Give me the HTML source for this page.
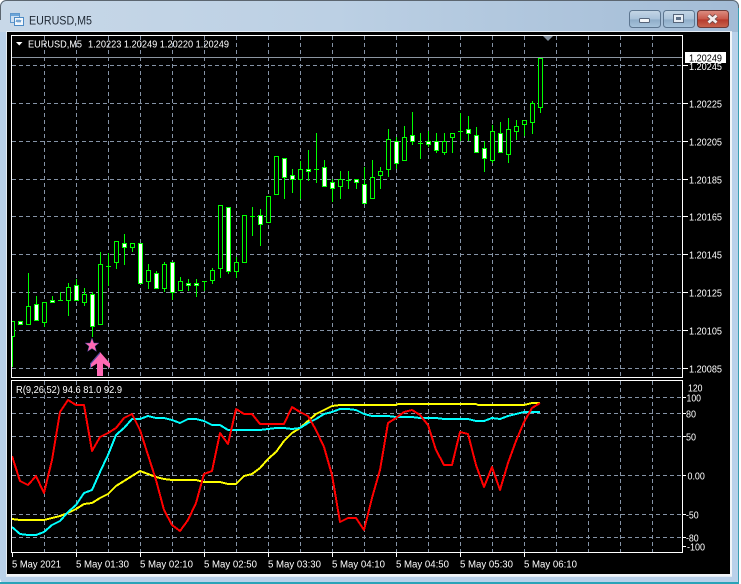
<!DOCTYPE html>
<html><head><meta charset="utf-8"><style>
html,body{margin:0;padding:0;background:#fff;width:741px;height:584px;overflow:hidden}
svg{display:block}
text{font-family:"Liberation Sans",sans-serif;font-size:10.5px;fill:#fff}
</style></head><body>
<svg width="741" height="584" viewBox="0 0 741 584" xmlns="http://www.w3.org/2000/svg">
<defs>
<linearGradient id="tb" x1="0" x2="1" y1="0" y2="0"><stop offset="0" stop-color="#c8d8e8"/><stop offset=".45" stop-color="#bcd0e4"/><stop offset="1" stop-color="#a3bcd6"/></linearGradient>
<linearGradient id="btn" x1="0" x2="0" y1="0" y2="1"><stop offset="0" stop-color="#c5d6e6"/><stop offset=".5" stop-color="#a9c2da"/><stop offset=".55" stop-color="#8fadc9"/><stop offset="1" stop-color="#a8c4dc"/></linearGradient>
<linearGradient id="cls" x1="0" x2="0" y1="0" y2="1"><stop offset="0" stop-color="#dc8f83"/><stop offset=".5" stop-color="#c9584a"/><stop offset=".55" stop-color="#b63a2c"/><stop offset="1" stop-color="#c9664f"/></linearGradient>
<clipPath id="cp"><rect x="12" y="36" width="671" height="342"/></clipPath>
</defs>
<!-- window -->
<rect x="0" y="0" width="739" height="584" rx="6" fill="#b9d1ea"/>
<path d="M0 32V7a6 6 0 0 1 6-6h727a6 6 0 0 1 6 6v25z" fill="url(#tb)"/>
<path d="M.5 20V7a6 6 0 0 1 6-6.5h726a6 6 0 0 1 6 6.500V20" fill="none" stroke="#5c6670"/>
<rect x="738" y="8" width="1" height="576" fill="#3a9fb2"/>
<rect x="0" y="582" width="739" height="2" fill="#2aa3b8"/>
<rect x="739" y="0" width="2" height="584" fill="#fff"/>
<rect x="6" y="31" width="726" height="546" fill="#e4ecf4"/>
<rect x="7" y="32" width="723" height="543" fill="#000"/>
<rect x="730" y="32" width="2" height="544" fill="#f2f5f8"/>
<rect x="7" y="574" width="725" height="2" fill="#f2f5f8"/>
<!-- icon -->
<g shape-rendering="crispEdges">
<rect x="10.500" y="13.500" width="9" height="9" fill="#cfe0f2" stroke="#5f97cc"/>
<rect x="11" y="14" width="8" height="2" fill="#6ca5d8"/>
<rect x="14.500" y="17.500" width="9" height="8" fill="#f2f7fc" stroke="#4d8bc6"/>
<path d="M16 22l1-2 1 2 1-2 1 2 1-2" fill="none" stroke="#4d8bc6"/>
</g>
<text x="29" y="24.500" style="font-size:12px;fill:#1d2733" textLength="63" lengthAdjust="spacingAndGlyphs">EURUSD,M5</text>
<!-- buttons -->
<rect x="629.500" y="10.500" width="31" height="17" rx="3" fill="url(#btn)" stroke="#5d7690"/>
<rect x="639.500" y="18.500" width="10" height="4" rx="1" fill="#f4f7fa" stroke="#56657a"/>
<rect x="663.500" y="10.500" width="31" height="17" rx="3" fill="url(#btn)" stroke="#5d7690"/>
<rect x="673.500" y="14.500" width="10" height="8" fill="#e8eef5" stroke="#56657a"/>
<rect x="676" y="17" width="5" height="3" fill="#5e7088"/>
<rect x="697.500" y="10.500" width="31" height="17" rx="3" fill="url(#cls)" stroke="#6e3a38"/>
<path d="M708.500 15.500l8 7M716.500 15.500l-8 7" stroke="#6b4a48" stroke-width="4.400"/>
<path d="M708.500 15.500l8 7M716.500 15.500l-8 7" stroke="#f4eeee" stroke-width="2.800"/>

<!-- grid -->
<g stroke="#8593a6" stroke-width="1" stroke-dasharray="4 3" fill="none" shape-rendering="crispEdges">
<path d="M12 65.500H683M12 103.500H683M12 141.500H683M12 179.500H683M12 216.500H683M12 254.500H683M12 292.500H683M12 330.500H683M12 368.500H683"/>
<path d="M12 397.500H683M12 413.500H683M12 436.500H683M12 475.500H683M12 514.500H683M12 537.500H683"/>
<path d="M44.500 36V378M76.500 36V378M108.500 36V378M140.500 36V378M172.500 36V378M204.500 36V378M236.500 36V378M268.500 36V378M300.500 36V378M332.500 36V378M364.500 36V378M396.500 36V378M428.500 36V378M460.500 36V378M492.500 36V378M524.500 36V378M556.500 36V378M588.500 36V378M620.500 36V378M652.500 36V378"/>
<path d="M44.500 381V553M76.500 381V553M108.500 381V553M140.500 381V553M172.500 381V553M204.500 381V553M236.500 381V553M268.500 381V553M300.500 381V553M332.500 381V553M364.500 381V553M396.500 381V553M428.500 381V553M460.500 381V553M492.500 381V553M524.500 381V553M556.500 381V553M588.500 381V553M620.500 381V553M652.500 381V553"/>
</g>
<!-- ask line -->
<path d="M12 57.500H683" stroke="#8c96a2" shape-rendering="crispEdges"/>
<path d="M543 36h10l-5 5z" fill="#7f8b99"/>

<!-- candles -->
<g clip-path="url(#cp)" shape-rendering="crispEdges" stroke="#00ff00" stroke-width="1">
<path fill="none" d="M12.500 321V367M28.500 273V324M36.500 296V304M44.500 302V327M52.500 296V302M60.500 292V300M68.500 283V316M76.500 279V300M84.500 288V306M92.500 292V337M100.500 252V324M108.500 253V286M116.500 241V269M124.500 234V265M132.500 243V252M148.500 264V289M156.500 271V288M164.500 262V292M172.500 262V300M180.500 277V290M188.500 279V291M196.500 279V297M204.500 281V291M212.500 268V284M220.500 205V278M228.500 207V274M236.500 257V278M252.500 207V236M260.500 209V246M268.500 196V223M284.500 158V199M292.500 169V193M300.500 161V199M308.500 150V181M316.500 133V183M324.500 160V186M332.500 179V202M340.500 171V199M348.500 171V189M356.500 179V189M364.500 167V203M372.500 160V198M380.500 167V189M388.500 129V177M396.500 137V169M404.500 126V160M412.500 112V145M420.500 133V159M428.500 131V147M436.500 133V153M444.500 133V155M452.500 133V153M460.500 113V141M468.500 116V141M476.500 127V152M484.500 141V172M492.500 125V163M500.500 122V152M508.500 118V163M516.500 120V140M524.500 120V136M532.500 101V134M540.500 58V113"/>
<path fill="none" d="M58 300.500h5M106 266.500h5M202 281.500h5M250 216.500h5M314 169.500h5M346 180.500h5M418 143.500h5M458 131.500h5"/>
<path fill="#000" d="M10.500 321.500h4v15h-4zM26.500 306.500h4v18h-4zM42.500 302.500h4v20h-4zM66.500 287.500h4v13h-4zM82.500 294.500h4v8h-4zM98.500 264.500h4v60h-4zM114.500 241.500h4v21h-4zM130.500 243.500h4v4h-4zM146.500 270.500h4v11h-4zM162.500 264.500h4v24h-4zM178.500 281.500h4v9h-4zM210.500 270.500h4v10h-4zM218.500 205.500h4v63h-4zM234.500 262.500h4v9h-4zM242.500 215.500h4v47h-4zM266.500 196.500h4v26h-4zM274.500 156.500h4v38h-4zM298.500 169.500h4v10h-4zM338.500 179.500h4v7h-4zM370.500 177.500h4v21h-4zM378.500 171.500h4v4h-4zM386.500 139.500h4v30h-4zM402.500 137.500h4v23h-4zM442.500 141.500h4v11h-4zM450.500 133.500h4v4h-4zM490.500 131.500h4v29h-4zM506.500 129.500h4v25h-4zM514.500 126.500h4v5h-4zM522.500 120.500h4v4h-4zM530.500 103.500h4v19h-4zM538.500 58.500h4v49h-4z"/>
<path fill="#fff" d="M18.500 321.500h4v3h-4zM34.500 304.500h4v16h-4zM50.500 300.500h4v2h-4zM74.500 285.500h4v15h-4zM90.500 294.500h4v32h-4zM122.500 243.500h4v4h-4zM138.500 243.500h4v40h-4zM154.500 273.500h4v15h-4zM170.500 262.500h4v30h-4zM186.500 283.500h4v2h-4zM194.500 283.500h4v2h-4zM226.500 207.500h4v64h-4zM258.500 215.500h4v9h-4zM282.500 158.500h4v19h-4zM290.500 175.500h4v4h-4zM306.500 169.500h4v2h-4zM322.500 167.500h4v19h-4zM330.500 182.500h4v6h-4zM354.500 179.500h4v3h-4zM362.500 184.500h4v19h-4zM394.500 141.500h4v22h-4zM410.500 135.500h4v6h-4zM426.500 141.500h4v3h-4zM434.500 141.500h4v9h-4zM466.500 129.500h4v4h-4zM474.500 135.500h4v17h-4zM482.500 148.500h4v10h-4zM498.500 133.500h4v19h-4z"/>
</g>

<!-- star and arrow -->
<path d="M92 338l1.900 5h5.100l-4 3.200 1.500 5.300-4.500-3-4.500 3 1.500-5.300-4-3.200h5.100z" fill="#ff69b4" stroke="#3a3f8f" stroke-width=".5"/>
<path d="M100 352l10 11.500v4.500l-7-4.500v12.500h-6v-12.500l-7 4.500v-4.500z" fill="#ff69b4"/>
<path d="M100 352l-10 11.500v4.500l1-.6v-3.400l9-10.200z" fill="#4a4aa0"/>

<!-- indicator lines -->
<g fill="none" stroke-width="2" stroke-linejoin="round" shape-rendering="crispEdges">
<polyline stroke="#ffff00" points="12,519 20,520 44,520 52,518 60,516 68,513 76,509 84,504 92,503 100,498 108,494 116,486 124,481 132,476 140,471 148,474 156,477 164,479 172,480 180,480 196,480 204,482 220,482 228,484 236,484 244,476 252,474 260,468 268,459 276,452 284,441 292,433 300,428 308,421 316,414 324,410 332,406 340,405 396,405 398,404 476,404 478,405 524,405 532,403 540,403"/>
<polyline stroke="#00ffff" points="12,527 20,534 28,535 36,535 44,532 52,525 60,521 68,512 76,505 84,493 92,490 100,472 108,455 116,435 124,428 132,419 140,419 148,416 156,418 164,418 172,420 180,423 188,419 196,419 204,421 212,425 220,425 228,430 260,430 276,428 284,428 292,429 300,428 308,423 316,419 324,414 332,412 340,409 348,409 356,410 364,414 372,416 388,416 396,417 412,417 420,418 436,418 444,419 468,419 476,421 484,421 492,418 500,419 508,416 516,414 524,412 540,412"/>
<polyline stroke="#ff0000" points="12,456 20,481 28,485 36,476 44,493 52,460 60,412 68,400 76,405 84,405 92,451 100,437 108,433 116,428 124,418 132,414 140,430 148,455 156,480 164,510 172,525 180,531 188,520 196,503 204,474 212,471 220,433 228,444 236,409 244,414 252,414 260,424 284,424 292,407 300,412 308,416 316,430 324,447 332,475 340,522 348,518 356,518 364,530 372,498 380,470 388,423 396,418 404,412 412,410 420,415 428,425 436,450 444,465 452,465 460,432 468,434 476,465 484,487 492,467 500,490 508,463 516,441 524,422 532,408 540,403"/>
</g>

<!-- frames -->
<g fill="none" stroke="#fff" stroke-width="1" shape-rendering="crispEdges">
<rect x="11.500" y="35.500" width="671" height="342"/>
<rect x="11.500" y="380.500" width="671" height="172"/>
<path d="M683 65.500h5M683 103.500h5M683 141.500h5M683 179.500h5M683 216.500h5M683 254.500h5M683 292.500h5M683 330.500h5M683 368.500h5"/>
<path d="M683 397.500h3M683 413.500h3M683 436.500h3M683 475.500h3M683 514.500h3M683 537.500h3M683 546.500h3"/>
<path d="M12.500 553v4M76.500 553v4M140.500 553v4M204.500 553v4M268.500 553v4M332.500 553v4M396.500 553v4M460.500 553v4M524.500 553v4"/>
</g>

<!-- header -->
<path d="M16 42h6.500l-3.250 3.500z" fill="#fff"/>
<text x="28" y="47.500" textLength="54" lengthAdjust="spacingAndGlyphs">EURUSD,M5</text>
<text x="88" y="47.500" textLength="141" lengthAdjust="spacingAndGlyphs">1.20223 1.20249 1.20220 1.20249</text>
<text x="16" y="393" textLength="106" lengthAdjust="spacingAndGlyphs">R(9,26,52) 94.6 81.0 92.9</text>

<!-- price labels -->
<g>
<text x="689" y="70" textLength="33" lengthAdjust="spacingAndGlyphs">1.20245</text>
<rect x="685" y="52" width="41" height="11" fill="#fff"/>
<text x="689" y="61.500" textLength="33" lengthAdjust="spacingAndGlyphs" style="fill:#000">1.20249</text>
<text x="689" y="107.500" textLength="33" lengthAdjust="spacingAndGlyphs">1.20225</text>
<text x="689" y="145.500" textLength="33" lengthAdjust="spacingAndGlyphs">1.20205</text>
<text x="689" y="183.500" textLength="33" lengthAdjust="spacingAndGlyphs">1.20185</text>
<text x="689" y="220.500" textLength="33" lengthAdjust="spacingAndGlyphs">1.20165</text>
<text x="689" y="258.500" textLength="33" lengthAdjust="spacingAndGlyphs">1.20145</text>
<text x="689" y="296.500" textLength="33" lengthAdjust="spacingAndGlyphs">1.20125</text>
<text x="689" y="334.500" textLength="33" lengthAdjust="spacingAndGlyphs">1.20105</text>
<text x="689" y="372.500" textLength="33" lengthAdjust="spacingAndGlyphs">1.20085</text>
</g>
<!-- indicator labels -->
<text x="688" y="391.500" textLength="14.500" lengthAdjust="spacingAndGlyphs">120</text>
<text x="686.500" y="401.500" textLength="14.500" lengthAdjust="spacingAndGlyphs">100</text>
<text x="686" y="417.500" textLength="10" lengthAdjust="spacingAndGlyphs">80</text>
<text x="686" y="440.500" textLength="10" lengthAdjust="spacingAndGlyphs">50</text>
<text x="687.500" y="479.500" textLength="17.300" lengthAdjust="spacingAndGlyphs">0.00</text>
<text x="686" y="518.500" textLength="12.700" lengthAdjust="spacingAndGlyphs">-50</text>
<text x="686" y="541.500" textLength="12.700" lengthAdjust="spacingAndGlyphs">-80</text>
<text x="687" y="550.500" textLength="18" lengthAdjust="spacingAndGlyphs">-100</text>
<!-- time labels -->
<g>
<text x="12" y="567.500" textLength="49" lengthAdjust="spacingAndGlyphs">5 May 2021</text>
<text x="76" y="567.500" textLength="53" lengthAdjust="spacingAndGlyphs">5 May 01:30</text>
<text x="140" y="567.500" textLength="53" lengthAdjust="spacingAndGlyphs">5 May 02:10</text>
<text x="204" y="567.500" textLength="53" lengthAdjust="spacingAndGlyphs">5 May 02:50</text>
<text x="268" y="567.500" textLength="53" lengthAdjust="spacingAndGlyphs">5 May 03:30</text>
<text x="332" y="567.500" textLength="53" lengthAdjust="spacingAndGlyphs">5 May 04:10</text>
<text x="396" y="567.500" textLength="53" lengthAdjust="spacingAndGlyphs">5 May 04:50</text>
<text x="460" y="567.500" textLength="53" lengthAdjust="spacingAndGlyphs">5 May 05:30</text>
<text x="524" y="567.500" textLength="53" lengthAdjust="spacingAndGlyphs">5 May 06:10</text>
</g>
</svg>
</body></html>
